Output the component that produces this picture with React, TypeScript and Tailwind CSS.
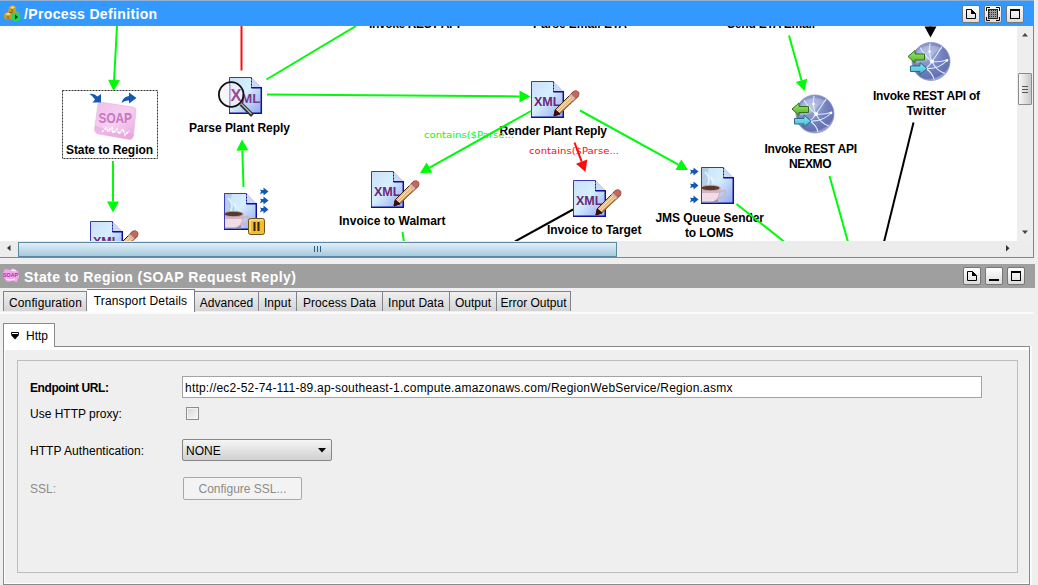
import React from "react";

const GREEN = "#00fb0a";
const RED = "#fa0d0d";

type Pt = [number, number];

function Edge({ from, to, head, color }: { from: Pt; to: Pt; head?: boolean; color: string }) {
  const dx = to[0] - from[0];
  const dy = to[1] - from[1];
  const len = Math.hypot(dx, dy);
  const ux = dx / len;
  const uy = dy / len;
  const b: Pt = head ? [to[0] - ux * 11, to[1] - uy * 11] : to;
  const points = [to, [b[0] - uy * 6, b[1] + ux * 6], [b[0] + uy * 6, b[1] - ux * 6]].map((p) => p.join(",")).join(" ");
  return (
    <g>
      <line x1={from[0]} y1={from[1]} x2={b[0]} y2={b[1]} stroke={color} strokeWidth="2" />
      {head && <polygon points={points} fill={color} />}
    </g>
  );
}

function Label({ x, y, w, children }: { x: number; y: number; w: number; children: string }) {
  return (
    <text x={x} y={y} textLength={w} fontSize="12" fontWeight="700" fill="#000">
      {children}
    </text>
  );
}

function Sheet() {
  return (
    <g>
      <path d="M.5 .5H22L32.5 11V36.5H.5Z" fill="url(#sheet)" />
      <path d="M22.5 .5L32.5 11H22.5Z" fill="#c9d9f6" stroke="#a9b9e6" strokeWidth=".6" />
      <path d="M.5 36V.5H22" fill="none" stroke="#3a3ab8" />
      <path d="M0 36.3H32.3V10.8H22.5" fill="none" stroke="#10109a" strokeWidth="1.5" />
      <path d="M22.5 .5V11" stroke="#10109a" strokeDasharray="2 1" />
    </g>
  );
}

function XmlIcon({ x, y }: { x: number; y: number }) {
  return (
    <g transform={`translate(${x} ${y})`}>
      <Sheet />
      <text x="3" y="24.5" textLength="26.5" lengthAdjust="spacingAndGlyphs" fontSize="13.5" fontWeight="700" fill="#6c2878">
        XML
      </text>
      <path d="M23 34.500L24.500 28.500L42.500 10.500L47.500 15L29 32.500Z" fill="#e9bd80" stroke="#3c2418" />
      <path d="M26 30L43 13M27.500 31.500L45 15" stroke="#fbe3b4" strokeWidth="1" />
      <path d="M28.500 32.500L45 17" stroke="#a8713c" strokeWidth="1.200" />
      <path d="M38.500 14.500L42 10.500Q45.500 8 48 11.500Q48.500 14 47 15.500L43 19Z" fill="#c1695c" stroke="#8c4038" strokeWidth=".6" />
      <path d="M38 15L40 13L44.500 17.500L42.500 19.500Z" fill="#d9b7ae" />
      <path d="M23 35L24.300 28.800L29 33Z" fill="#350d0d" stroke="#350d0d" />
    </g>
  );
}

function CoffeeIcon({ x, y }: { x: number; y: number }) {
  return (
    <g transform={`translate(${x} ${y})`}>
      <Sheet />
      <path d="M1 1H8Q4 9 13 17V20H1Z" fill="#a9c3de" opacity=".7" />
      <path d="M4 5Q10 10 7 18M10 10Q13 14 11 18" stroke="#eef6fc" strokeWidth="1.800" fill="none" opacity=".8" />
      <path d="M19 25Q25 21 24 27Q22 32 17 31" fill="none" stroke="#cdb6c8" strokeWidth="2" />
      <path d="M1 20H20Q20 32 14 35H1Z" fill="#d3b6c6" />
      <path d="M1 26H18Q17 32 13 34H1Z" fill="#efdce6" />
      <ellipse cx="9.500" cy="21" rx="9.500" ry="2.700" fill="#5a392d" stroke="#ccb0b4" strokeWidth=".8" />
      <path d="M1 35Q10 37 17 32V35.500H1Z" fill="#9f8fae" />
      <path d="M.5 36V.5" stroke="#3a3ab8" />
    </g>
  );
}

function SmallArrow({ x, y }: { x: number; y: number }) {
  return <path transform={`translate(${x} ${y})`} d="M0 -2L1.500 -1.500H3.500V-4L8.500 0L3.500 4V1.800H2L0 3L1 0Z" fill="#1657b4" />;
}

function Globe({ x, y }: { x: number; y: number }) {
  return (
    <g transform={`translate(${x} ${y})`}>
      <circle r="19" fill="url(#globe)" stroke="#8d93c0" strokeWidth=".8" />
      <path d="M-14 -10Q-4 -20 12 -13Q4 -10 -1 -3Q-9 2 -17 2Z" fill="#fff" opacity=".25" />
      <g fill="none" stroke="#dcecff" strokeWidth="1.100">
        <path d="M-1 -18Q-3 -8 1 0Q5 9 14 12" />
        <path d="M-11 -14Q-4 -3 1 0Q9 1 17 -2" />
        <path d="M-15 10Q-4 9 1 0Q6 -7 11 -15" />
        <path d="M-5 7Q2 12 3 18" />
        <path d="M17 -2Q8 8 -5 7" />
      </g>
      <circle cx="1" r="2" fill="#fff" />
      <circle cx="-1.500" cy="-10" r="1.300" fill="#fff" />
      <circle cx="16" cy="-1" r="1.300" fill="#fff" />
      <path d="M-23 -5L-16 -11V-7.500H-6.500V-1.500H-16V1.500Z" fill="url(#leaf)" stroke="#2f6f1f" />
      <path d="M-20.500 4.500H-11V1L-4 7.200L-11 13V10H-20.500Z" fill="url(#aqua)" stroke="#2a6c84" />
    </g>
  );
}

function SoapBar() {
  return (
    <g>
      <path d="M98 104Q100 102 103 102.500L133 107Q136.500 108 136 111L133.500 135Q133 139 130 139.500L99 134Q94 133 94.500 129Z" fill="url(#soap)" stroke="#eab4e2" strokeWidth=".6" />
      <path d="M95 126Q103 127 109 132L134 134Q133 139 130 139.500L99 134Q94 133 95 126Z" fill="#e79bdc" opacity=".5" />
      <text x="98.500" y="122.500" textLength="33.500" lengthAdjust="spacingAndGlyphs" fontSize="14" fontWeight="700" fill="#c777c3">
        SOAP
      </text>
      <path d="M102 132L106 128L108 131L112 127.500L113 133L117 129L119 134L123 129L125 135L129 131" fill="none" stroke="#fff" strokeWidth="1.500" strokeDasharray="2.500 1" />
      <path d="M89.500 94Q94 93 97.500 96.500L101 94V102.500H92.500L95 99.500Q93 96 89.500 94Z" fill="#1657b4" />
      <path d="M121.500 103Q123 96.500 129 96V92.500L136.500 98L129 103.500V100.500Q125 100 121.500 103Z" fill="#1657b4" />
    </g>
  );
}

function Diagram() {
  return (
    <svg width="1017" height="215" viewBox="0 26 1017 215" className="block shrink-0 bg-white" fontFamily="'Liberation Sans', Arial, sans-serif">
      <defs>
        <linearGradient id="sheet" x1="0" y1="0" x2="1" y2="1">
          <stop offset="0" stopColor="#c9dffa" />
          <stop offset=".45" stopColor="#d6effd" />
          <stop offset="1" stopColor="#8fa4f0" />
        </linearGradient>
        <radialGradient id="globe" cx=".4" cy=".3" r=".75">
          <stop offset="0" stopColor="#a9b4de" />
          <stop offset=".55" stopColor="#7480be" />
          <stop offset=".85" stopColor="#6470b2" />
          <stop offset="1" stopColor="#c3d0f0" />
        </radialGradient>
        <linearGradient id="leaf" x1="0" y1="0" x2="0" y2="1">
          <stop offset="0" stopColor="#a2ec6c" />
          <stop offset="1" stopColor="#4fae28" />
        </linearGradient>
        <linearGradient id="aqua" x1="0" y1="0" x2="0" y2="1">
          <stop offset="0" stopColor="#93ecf5" />
          <stop offset="1" stopColor="#3fb4cf" />
        </linearGradient>
        <linearGradient id="soap" x1="0" y1="0" x2="1" y2="1">
          <stop offset="0" stopColor="#f0bfea" />
          <stop offset=".5" stopColor="#f6d0f0" />
          <stop offset="1" stopColor="#e9a6df" />
        </linearGradient>
      </defs>

      <Label x={369} y={27.6} w={91}>Invoke REST API</Label>
      <Label x={533} y={27.8} w={94}>Parse Email ETA</Label>
      <Label x={727} y={27.8} w={88}>Send ETA Email</Label>

      <XmlIcon x={531} y={81} />
      <Label x={499.500} y={135} w={107.500}>Render Plant Reply</Label>
      <g fontSize="9" fontFamily="'DejaVu Sans', sans-serif">
        <text x="424" y="138" textLength="90" lengthAdjust="spacingAndGlyphs" fill={GREEN}>contains($Parse...</text>
        <text x="529" y="154" textLength="90" lengthAdjust="spacingAndGlyphs" fill={RED}>contains($Parse...</text>
      </g>

      <Label x={655.500} y={222} w={108.500}>JMS Queue Sender</Label>
      <Label x={685} y={237} w={48.500}>to LOMS</Label>

      <Edge from={[117, 26]} to={[113.500, 91]} head color={GREEN} />
      <Edge from={[113, 161]} to={[113, 212.500]} head color={GREEN} />
      <Edge from={[241.500, 26]} to={[241.500, 70.500]} color={RED} />
      <Edge from={[266.500, 79.500]} to={[356, 26]} color={GREEN} />
      <Edge from={[267, 94.500]} to={[530.500, 96.500]} head color={GREEN} />
      <Edge from={[243.500, 187]} to={[242, 139.500]} head color={GREEN} />
      <Edge from={[531, 111]} to={[420, 173]} head color={GREEN} />
      <Edge from={[574.500, 142.500]} to={[585.500, 172]} head color={RED} />
      <Edge from={[580, 110.500]} to={[688, 170]} head color={GREEN} />
      <Edge from={[736.500, 204]} to={[784, 241.500]} color={GREEN} />
      <Edge from={[402.500, 232]} to={[404, 242]} color={GREEN} />
      <Edge from={[573, 209.500]} to={[515, 241.500]} color="#000" />
      <Edge from={[789, 35.500]} to={[804.500, 91]} head color={GREEN} />
      <Edge from={[829.500, 176]} to={[848, 242]} color={GREEN} />
      <Edge from={[930.500, 16]} to={[930.500, 37.500]} head color="#000" />
      <Edge from={[913.500, 122.500]} to={[884, 242]} color="#000" />

      <rect x="62.500" y="90.500" width="95" height="68" fill="none" stroke="#333" strokeDasharray="2 1" />
      <SoapBar />
      <Label x={66} y={154} w={87}>State to Region</Label>

      <g transform="translate(229 77)">
        <Sheet />
        <text x="12" y="26" textLength="19.500" lengthAdjust="spacingAndGlyphs" fontSize="13.500" fontWeight="700" fill="#7b3a90">
          ML
        </text>
        <circle cx="2.200" cy="17.500" r="12.300" fill="#f6eef8" fillOpacity=".7" />
        <path d="M1 6V29" stroke="#8d8de0" />
        <text x="1.500" y="24" textLength="11" lengthAdjust="spacingAndGlyphs" fontSize="17" fontWeight="700" fill="#9a4a94">
          X
        </text>
        <path d="M12 27L23.500 38.500" stroke="#333" strokeWidth="4" />
        <path d="M12.500 27L22.500 37" stroke="#b9b9b9" strokeWidth="1.200" />
        <circle cx="2.200" cy="17.500" r="12.300" fill="none" stroke="#111" strokeWidth="1.800" />
      </g>
      <Label x={189} y={132} w={101}>Parse Plant Reply</Label>

      <XmlIcon x={90} y={221} />
      <CoffeeIcon x={224} y={193} />
      <SmallArrow x={260} y={191.500} />
      <SmallArrow x={260} y={200.500} />
      <SmallArrow x={260} y={209.500} />
      <rect x="248.500" y="218.500" width="16" height="16" rx="2" fill="#f5bd2c" stroke="#6e5417" />
      <path d="M250 220H263M250 220V232" stroke="#fff0a0" />
      <path d="M254.500 222V231M258.500 222V231" stroke="#2c2410" strokeWidth="2" />

      <XmlIcon x={371} y={171} />
      <Label x={339} y={225} w={106.500}>Invoice to Walmart</Label>
      <XmlIcon x={573} y={180} />
      <Label x={547} y={234} w={94.500}>Invoice to Target</Label>

      <CoffeeIcon x={701} y={167} />
      <SmallArrow x={690} y={171.500} />
      <SmallArrow x={690} y={185.500} />
      <SmallArrow x={690} y={199.500} />

      <Globe x={815} y={114} />
      <Label x={764.500} y={153} w={92.500}>Invoke REST API</Label>
      <Label x={789} y={168} w={42.500}>NEXMO</Label>
      <Globe x={931} y={61.500} />
      <Label x={873} y={100} w={107}>Invoke REST API of</Label>
      <Label x={906.500} y={115} w={39.500}>Twitter</Label>
    </svg>
  );
}

function BarButton({ children }: { children: React.ReactNode }) {
  return (
    <button className="flex h-[18px] w-[18px] items-center justify-center rounded-[2px] border border-[#777] bg-gradient-to-b from-white to-[#dcdcdc]">
      <svg width="14" height="14" viewBox="0 0 14 14" className="shrink-0">{children}</svg>
    </button>
  );
}

const pageGlyph = (
  <>
    <path d="M2.500 2.500H7.500L11.500 6.500V11.500H2.500Z" fill="none" stroke="#000" />
    <path d="M7 2L12 7H7Z" fill="#000" />
  </>
);
const squareGlyph = (
  <>
    <rect x="2.500" y="2.500" width="9" height="9" fill="none" stroke="#000" />
    <path d="M2 3H12" stroke="#000" strokeWidth="2" />
  </>
);

const tabs: { name: string; box: string; active?: boolean }[] = [
  { name: "Configuration", box: "w-[84px] pl-px tracking-[0.12px]" },
  { name: "Transport Details", box: "w-[108px] tracking-[0.15px]", active: true },
  { name: "Advanced", box: "w-[64px]" },
  { name: "Input", box: "w-[38px] tracking-[0.1px]" },
  { name: "Process Data", box: "w-[86px] tracking-[0.1px]" },
  { name: "Input Data", box: "w-[67px] tracking-[0.05px]" },
  { name: "Output", box: "w-[47px]" },
  { name: "Error Output", box: "w-[74px]" },
];

export default function App() {
  return (
    <div className="flex h-[585px] w-[1038px] flex-col overflow-hidden bg-[#efefef] font-['Liberation_Sans',Arial,sans-serif] text-[12px] leading-[14px] text-black">
      <section className="flex h-[258px] w-[1034px] flex-col border-b border-r border-[#858585]">
        <header className="flex h-[26px] w-[1034px] shrink-0 items-center border-t border-[#8fb0d4] bg-[#3399ff] pl-[4px] pr-[10px]">
          <svg width="17" height="17" viewBox="0 0 17 17" className="mr-[3px]">
            <path d="M5.500 1.500L9 0L12 2V6L15 8V13L9 15.500L6 14L3 15L0 13V9L4 6.500Z" fill="#c99a25" />
            <path d="M6 2L9 1L11 2.500L8 4ZM1 9L4.500 7.500L7 9L4 10.500Z" fill="#f5d878" />
            <path d="M8 4V8L5 7M4 11V14" stroke="#805f14" fill="none" />
            <circle cx="12" cy="12" r="4.600" fill="#23d45e" />
            <path d="M11 9.500L14 12L11 14.500Z" fill="#0c3318" />
          </svg>
          <h1 className="flex-1 text-[14px] font-bold leading-[16px] tracking-[0.35px] text-white">/Process Definition</h1>
          <div className="flex gap-[4px]">
            <BarButton>{pageGlyph}</BarButton>
            <BarButton>
              <path d="M.5 4V.5H4M10 .5H13.500V4M13.500 10V13.500H10M4 13.500H.5V10" fill="none" stroke="#000" />
              <rect x="3" y="3" width="8" height="8" fill="#999" />
              <path d="M3 3.500H11M3 5.500H11M3 7.500H11M3 9.500H11" stroke="#333" strokeDasharray="1 1" />
              <rect x="2.500" y="2.500" width="9" height="9" fill="none" stroke="#222" />
            </BarButton>
            <BarButton>{squareGlyph}</BarButton>
          </div>
        </header>
        <div className="flex h-[215px]">
          <Diagram />
          <div className="flex w-[16px] flex-col items-center bg-[#eeeeee]">
            <svg width="16" height="47" viewBox="0 0 16 47">
              <path d="M5 10.500H11L8 7Z" fill="#444" />
            </svg>
            <div className="flex h-[32px] w-[14px] flex-col items-center justify-center gap-[2px] rounded-[1px] border border-[#8c8c8c] bg-gradient-to-r from-[#f8f8f8] to-[#c8c8c8]">
              <i className="h-px w-[6px] bg-[#555]" />
              <i className="h-px w-[6px] bg-[#555]" />
              <i className="h-px w-[6px] bg-[#555]" />
            </div>
            <svg width="16" height="136" viewBox="0 0 16 136">
              <path d="M5 125.500H11L8 129Z" fill="#444" />
            </svg>
          </div>
        </div>
        <div className="flex h-[16px] items-center bg-[#ececec]">
          <svg width="18" height="16" viewBox="0 0 18 16">
            <path d="M10.500 4V10L7 7Z" fill="#333" />
          </svg>
          <div className="flex h-[15px] w-[599px] items-center justify-center gap-[2px] border border-[#5b87a3] bg-gradient-to-b from-[#e2eff7] via-[#c4dcea] to-[#a3cbdf]">
            <i className="h-[6px] w-px bg-[#285f80]" />
            <i className="h-[6px] w-px bg-[#285f80]" />
            <i className="h-[6px] w-px bg-[#285f80]" />
          </div>
          <svg width="400" height="16" viewBox="0 0 400 16">
            <path d="M389 4V10.500L392.500 7.200Z" fill="#333" />
          </svg>
        </div>
      </section>

      <header className="mt-[6px] flex h-[24px] w-[1035px] shrink-0 items-center bg-[#9f9f9f] pl-[3px] pr-[10px]">
        <svg width="17" height="16" viewBox="0 0 17 16" className="mr-[4px]" fontFamily="'Liberation Sans', sans-serif">
          <path d="M2 1L8 2L10 0L15 3L16 9L14 14L9 13L4 14L1 10L0 5Z" fill="#f2a9e9" />
          <path d="M3 11L7 12L12 11M8 2L13 3" stroke="#fff" fill="none" />
          <text x="0" y="8.500" fontSize="6" fontWeight="700" textLength="15" lengthAdjust="spacingAndGlyphs" fill="#c01fae">SOAP</text>
        </svg>
        <h2 className="flex-1 pt-[2px] text-[14px] font-bold leading-[16px] tracking-[0.44px] text-white">State to Region (SOAP Request Reply)</h2>
        <div className="flex gap-[4px]">
          <BarButton>{pageGlyph}</BarButton>
          <BarButton><path d="M2 11H12" stroke="#000" strokeWidth="2" /></BarButton>
          <BarButton>{squareGlyph}</BarButton>
        </div>
      </header>

      <nav className="mt-px flex h-[23px] w-[1034px] shrink-0 items-end pl-[3px]">
        {tabs.map((t) =>
          t.active ? (
            <button key={t.name} className={`h-[23px] shrink-0 whitespace-nowrap border-r border-t border-[#7a7a85] bg-white pb-px ${t.box}`}>
              {t.name}
            </button>
          ) : (
            <button key={t.name} className={`mb-px h-[20px] shrink-0 whitespace-nowrap border-r border-t border-[#82828c] bg-gradient-to-b from-[#f0f0f0] to-[#d4d4d4] pt-[2px] first:border-l ${t.box}`}>
              {t.name}
            </button>
          ),
        )}
      </nav>
      <div className="h-[2px] w-[1034px] shrink-0 bg-[#fafafa]" />

      <div className="mt-[9px] flex pl-[3px]">
        <div className="z-10 -mb-px flex h-[24px] w-[52px] items-center border-x border-t border-[#8a8a8e] bg-white pl-[7px]">
          <svg width="9" height="8" viewBox="0 0 9 8" className="mr-[6px]">
            <path d="M.5 .5H7.500V2.500H.5Z" fill="#fff" stroke="#000" />
            <path d="M0 3H8L4 7.500Z" fill="#000" />
          </svg>
          <span>Http</span>
        </div>
      </div>
      <main className="ml-[3px] flex h-[239px] w-[1027px] shrink-0 flex-col border border-[#8a8a8e] pb-[10px] pl-[13px] pr-[11px] shadow-[inset_0_3px_0_#fff,inset_1px_0_0_#fff,inset_0_-1px_0_#fff,2px_0_0_#fafafa]">
        <div className="mt-[13px] flex h-[213px] w-[1001px] shrink-0 flex-col border border-[#bdbdbd] pl-[12px]">
          <div className="mt-[15px] flex h-[22px] items-center">
            <label className="w-[152px] pt-px font-bold tracking-[-0.42px]">Endpoint URL:</label>
            <input
              readOnly
              value="http://ec2-52-74-111-89.ap-southeast-1.compute.amazonaws.com/RegionWebService/Region.asmx"
              className="h-[22px] w-[800px] border border-[#a3a3a3] bg-white px-[2px] pt-px text-[12px] tracking-[0.21px] outline-none"
            />
          </div>
          <div className="mt-[9px] flex h-[13px] items-center">
            <label className="w-[156px]">Use HTTP proxy:</label>
            <span className="h-[13px] w-[13px] border border-[#8d8d8d] bg-gradient-to-br from-[#d5d5d5] to-[#fafafa] shadow-[inset_0_0_0_1px_#f4f4f4]" />
          </div>
          <div className="mt-[19px] flex h-[22px] items-center">
            <label className="w-[152px] pt-[2px] tracking-[0.05px]">HTTP Authentication:</label>
            <div className="flex h-[22px] w-[150px] items-center justify-between rounded-[2px] border border-[#858585] bg-gradient-to-b from-[#f6f6f6] to-[#d0d0d0] pl-[3px] pr-[5px]">
              <span className="pt-[2px]">NONE</span>
              <svg width="8" height="5" viewBox="0 0 8 5">
                <path d="M0 0H8L4 4.500Z" fill="#000" />
              </svg>
            </div>
          </div>
          <div className="mt-[16px] flex h-[23px] items-center text-[#8c8c8c]">
            <label className="w-[153px]">SSL:</label>
            <button className="h-[23px] w-[119px] rounded-[2px] border border-[#a8a8a8] bg-[#f3f3f3]">Configure SSL...</button>
          </div>
        </div>
      </main>
    </div>
  );
}
